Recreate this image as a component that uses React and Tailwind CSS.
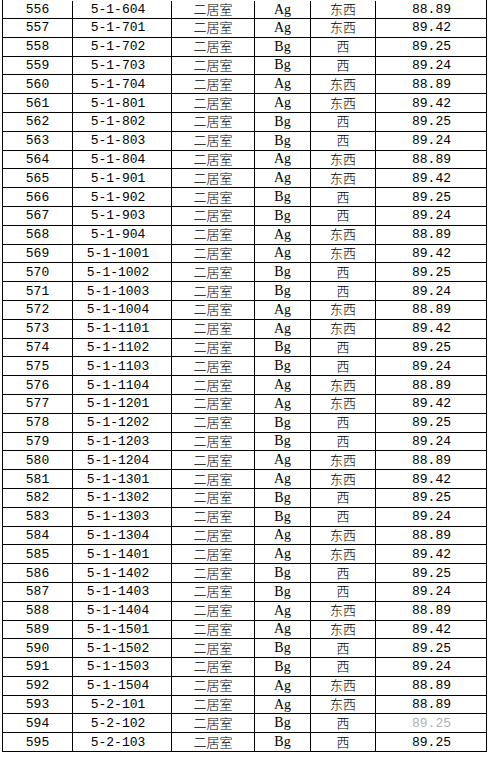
import React from "react";

// unit pattern per floor: position -> [type, orientation, area]
const UNIT_TYPES = {
    1: ["Ag", "东西", "89.42"],
    2: ["Bg", "西", "89.25"],
    3: ["Bg", "西", "89.24"],
    4: ["Ag", "东西", "88.89"],
};

function buildRows() {
    const rows = [{ no: 556, unit: "5-1-604", type: "Ag", dir: "东西", area: "88.89" }];
    let no = 557;
    for (let floor = 7; floor <= 15; floor++) {
        for (let pos = 1; pos <= 4; pos++) {
            const [type, dir, area] = UNIT_TYPES[pos];
            rows.push({ no: no++, unit: `5-1-${floor}0${pos}`, type, dir, area });
        }
    }
    rows.push({ no: no++, unit: "5-2-101", type: "Ag", dir: "东西", area: "88.89" });
    rows.push({ no: no++, unit: "5-2-102", type: "Bg", dir: "西", area: "89.25", faded: true });
    rows.push({ no: no++, unit: "5-2-103", type: "Bg", dir: "西", area: "89.25" });
    return rows;
}

const rows = buildRows();

const MONO = "font-['Liberation_Mono','Noto_Sans_CJK_SC',monospace]";
const SERIF = "font-['Liberation_Serif','Noto_Sans_CJK_SC',serif] text-[14px]";
const CJK = "font-['Noto_Sans_CJK_SC',sans-serif] font-light pb-[2px]";

function App() {
    return (
        <div className="w-[490px] h-[758px] bg-white overflow-hidden">
            <div className="ml-[2px] w-[485px] border-l border-r border-black text-[13px] text-black">
                {rows.map((row, i) => (
                    <div
                        key={row.no}
                        className={`grid grid-cols-[70px_99px_83px_56px_65px_111px] border-b border-black ${i === 0 ? "h-[19px] pt-px" : "h-[18.8px]"
                            }`}
                    >
                        <Cell className={MONO}>{row.no}</Cell>
                        <Cell className={`${MONO} pr-[8px]`}>{row.unit}</Cell>
                        <Cell className={CJK}>二居室</Cell>
                        <Cell className={SERIF}>{row.type}</Cell>
                        <Cell className={CJK}>{row.dir}</Cell>
                        <Cell last className={`${MONO} ${row.faded ? "text-[#b0b0b0]" : ""}`}>
                            {row.area}
                        </Cell>
                    </div>
                ))}
            </div>
        </div>
    );
}

// Table cell
function Cell({ children, className = "", last = false }) {
    return (
        <div
            className={`flex items-center justify-center leading-none whitespace-nowrap ${last ? "" : "border-r border-black"
                } ${className}`}
        >
            {children}
        </div>
    );
}

export default App;
